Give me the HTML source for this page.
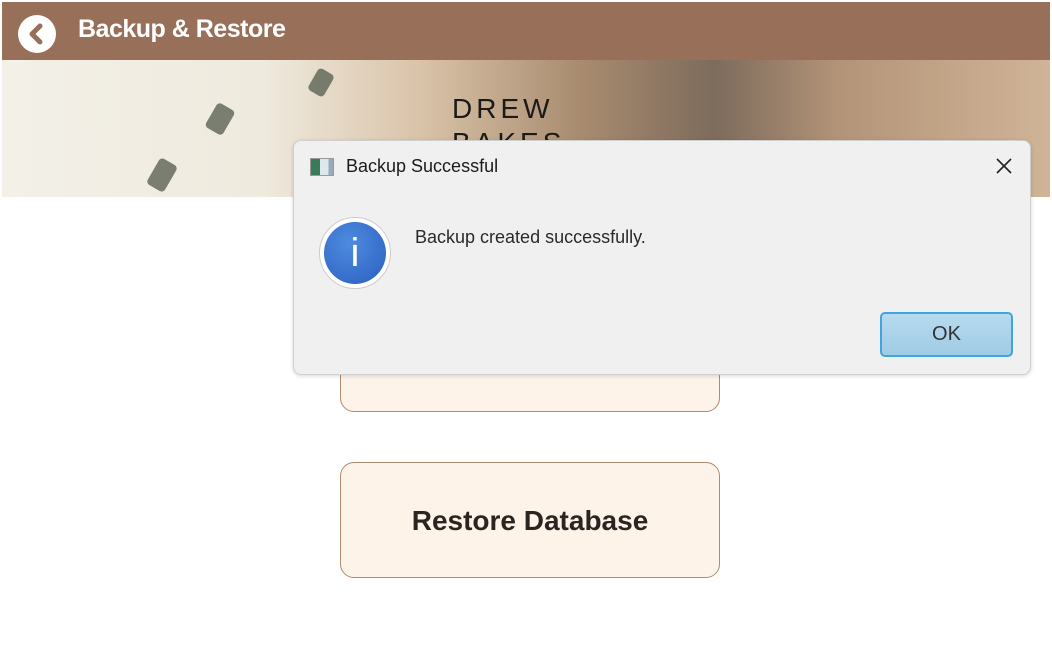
<!DOCTYPE html>
<html><head><meta charset="utf-8"><style>
*{margin:0;padding:0;box-sizing:border-box}
body{width:1052px;height:664px;background:#fff;position:relative;overflow:hidden;font-family:"Liberation Sans",sans-serif}
.hdr{position:absolute;left:2px;top:2px;width:1048px;height:58px;background:#987059}
.back{position:absolute;left:16px;top:13px;width:38px;height:38px;border-radius:50%;background:#fff}
.hdr h1{position:absolute;left:76px;top:13px;color:#fff;font-size:25px;font-weight:bold;letter-spacing:-0.5px}
.banner{position:absolute;left:2px;top:60px;width:1048px;height:137px;overflow:hidden;
background:linear-gradient(90deg,#f3f0e8 0%,#efeade 25%,#d9c3a8 40%,#a98c70 55%,#7d6b5c 68%,#b49478 80%,#d0b497 100%)}
.blob{position:absolute;background:#5b6354;border-radius:4px;opacity:.8;transform:rotate(30deg)}
.logo{position:absolute;left:452px;top:92px;font-size:28px;letter-spacing:4px;color:#1c1a18;line-height:34px}
.btn{position:absolute;left:340px;width:380px;background:#fdf3e9;border:1.5px solid #b08a6e;border-radius:14px;font-weight:bold;font-size:28px;color:#2b2522;text-align:center}
.dlg{position:absolute;left:293px;top:140px;width:738px;height:235px;background:#f0f0f0;border:1px solid #cfcfcf;border-radius:8px;box-shadow:0 1px 4px rgba(0,0,0,.15)}
.ttl{position:absolute;left:52px;top:15px;font-size:18px;color:#1b1b1b}
.ico{position:absolute;left:16px;top:17px;width:24px;height:18px;border:1px solid #999;background:linear-gradient(90deg,#3a7a5a 0 40%,#dfe7ee 40% 80%,#9ab 80%)}
.x{position:absolute;left:701px;top:16px}
.info{position:absolute;left:25px;top:76px;width:72px;height:72px;border-radius:50%;background:#fff;border:1px solid #ccc}
.info div{position:absolute;left:4px;top:4px;width:62px;height:62px;border-radius:50%;background:radial-gradient(circle at 40% 35%,#4e8be0,#2a5fbe);color:#fff;font-size:40px;text-align:center;line-height:62px}
.msg{position:absolute;left:121px;top:86px;font-size:18px;color:#2a2a2a}
.ok{position:absolute;left:586px;top:171px;width:133px;height:45px;border:2px solid #3fa6dd;border-radius:5px;background:linear-gradient(#b7dbef,#9fcbe4);text-align:center;line-height:41px;font-size:20px;color:#333}
</style></head><body>
<div class="hdr"><div class="back"><svg width="38" height="38" viewBox="0 0 38 38"><path d="M22 11 L14 19 L22 27" stroke="#987059" stroke-width="5" fill="none" stroke-linecap="round" stroke-linejoin="round"/></svg></div><h1>Backup &amp; Restore</h1></div>
<div class="banner">
<div class="blob" style="left:150px;top:100px;width:20px;height:30px"></div>
<div class="blob" style="left:208px;top:45px;width:20px;height:28px"></div>
<div class="blob" style="left:310px;top:10px;width:18px;height:25px"></div>
</div>
<div class="logo">DREW<br>BAKES</div>
<div class="btn" style="top:296px;height:116px;line-height:116px">Backup Database</div>
<div class="btn" style="top:462px;height:116px;line-height:116px">Restore Database</div>
<div class="dlg">
<div class="ico"></div><div class="ttl">Backup Successful</div>
<svg class="x" width="18" height="18" viewBox="0 0 18 18"><path d="M2 2L16 16M16 2L2 16" stroke="#222" stroke-width="1.6"/></svg>
<div class="info"><div>i</div></div>
<div class="msg">Backup created successfully.</div>
<div class="ok">OK</div>
</div>
</body></html>
